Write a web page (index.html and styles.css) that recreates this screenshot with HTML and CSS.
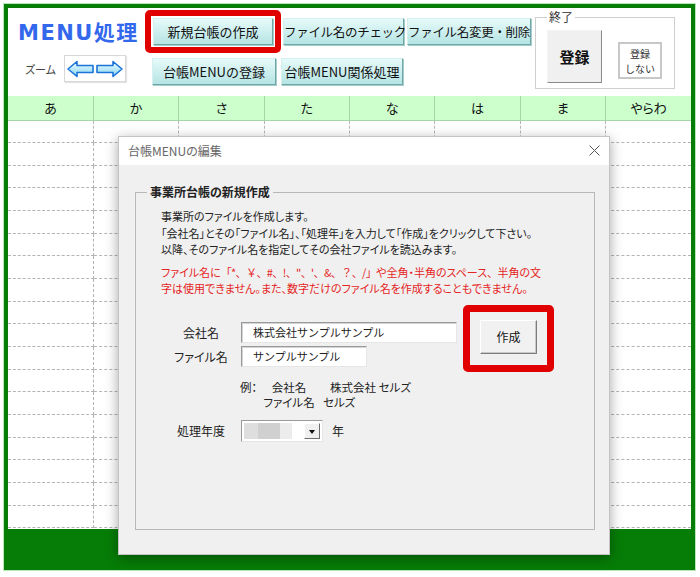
FILE: index.html
```html
<!DOCTYPE html>
<html>
<head>
<meta charset="utf-8">
<title>MENU処理</title>
<link rel="stylesheet" href="styles.css">
</head>
<body>
<div class="frame">
  <div class="sheet">
    <div class="top">
      <div class="brand">
        <div class="title">MENU処理</div>
        <div class="zoom">
          <span class="zoom-label">ズーム</span>
          <span class="zoom-box">
            <svg width="58" height="20" viewBox="0 0 58 20">
              <defs>
                <linearGradient id="ag" x1="0" y1="0" x2="0" y2="1">
                  <stop offset="0" stop-color="#f0fcff"/>
                  <stop offset="1" stop-color="#86d6f2"/>
                </linearGradient>
              </defs>
              <path d="M2 10 L11 2.5 L11 6.5 L27 6.5 L27 13.5 L11 13.5 L11 17.5 Z" fill="url(#ag)" stroke="#1c74d8" stroke-width="1.6" stroke-linejoin="round"/>
              <path d="M56 10 L47 2.5 L47 6.5 L31 6.5 L31 13.5 L47 13.5 L47 17.5 Z" fill="url(#ag)" stroke="#1c74d8" stroke-width="1.6" stroke-linejoin="round"/>
            </svg>
          </span>
        </div>
      </div>
      <div class="actions">
        <div class="row1">
          <div class="mark mark-new"><button class="cyan w120">新規台帳の作成</button></div>
          <button class="cyan tight w121 gap2">ファイル名のチェック</button>
          <button class="cyan tight w124 gap3">ファイル名変更・削除</button>
        </div>
        <div class="row2">
          <button class="cyan w124">台帳MENUの登録</button>
          <button class="cyan w122 gap5">台帳MENU関係処理</button>
        </div>
      </div>
      <fieldset class="quit">
        <legend>終了</legend>
        <div class="quit-body">
          <button class="save">登録</button>
          <button class="nosave">登録<br>しない</button>
        </div>
      </fieldset>
    </div>
    <table class="grid">
      <tr><th>あ</th><th>か</th><th>さ</th><th>た</th><th>な</th><th>は</th><th>ま</th><th>やらわ</th></tr>
      <tr><td></td><td></td><td></td><td></td><td></td><td></td><td></td><td></td></tr>
      <tr><td></td><td></td><td></td><td></td><td></td><td></td><td></td><td></td></tr>
      <tr><td></td><td></td><td></td><td></td><td></td><td></td><td></td><td></td></tr>
      <tr><td></td><td></td><td></td><td></td><td></td><td></td><td></td><td></td></tr>
      <tr><td></td><td></td><td></td><td></td><td></td><td></td><td></td><td></td></tr>
      <tr><td></td><td></td><td></td><td></td><td></td><td></td><td></td><td></td></tr>
      <tr><td></td><td></td><td></td><td></td><td></td><td></td><td></td><td></td></tr>
      <tr><td></td><td></td><td></td><td></td><td></td><td></td><td></td><td></td></tr>
      <tr><td></td><td></td><td></td><td></td><td></td><td></td><td></td><td></td></tr>
      <tr><td></td><td></td><td></td><td></td><td></td><td></td><td></td><td></td></tr>
      <tr><td></td><td></td><td></td><td></td><td></td><td></td><td></td><td></td></tr>
      <tr><td></td><td></td><td></td><td></td><td></td><td></td><td></td><td></td></tr>
      <tr><td></td><td></td><td></td><td></td><td></td><td></td><td></td><td></td></tr>
      <tr><td></td><td></td><td></td><td></td><td></td><td></td><td></td><td></td></tr>
      <tr><td></td><td></td><td></td><td></td><td></td><td></td><td></td><td></td></tr>
      <tr><td></td><td></td><td></td><td></td><td></td><td></td><td></td><td></td></tr>
      <tr><td></td><td></td><td></td><td></td><td></td><td></td><td></td><td></td></tr>
      <tr><td></td><td></td><td></td><td></td><td></td><td></td><td></td><td></td></tr>
    </table>
  </div>

  <div class="dialog">
    <div class="dlg-title">
      <span>台帳MENUの編集</span>
      <svg class="dlg-close" width="11" height="11" viewBox="0 0 11 11">
        <path d="M0.5 0.5 L10.5 10.5 M10.5 0.5 L0.5 10.5" stroke="#555" stroke-width="1"/>
      </svg>
    </div>
    <div class="dlg-body">
      <fieldset class="group">
        <legend>事業所台帳の新規作成</legend>
        <p class="desc">事業所のファイルを作成します。<br>「会社名」とその「ファイル名」、「処理年」を入力して「作成」をクリックして下さい。<br>以降、そのファイル名を指定してその会社ファイルを読込みます。</p>
        <p class="warn">ファイル名に<span class="wide-punct">「*、￥、#、!、"、'、&amp;、？、/」</span>や全角・半角のスペース、 &nbsp;半角の文<br>字は使用できません。また、数字だけのファイル名を作成することもできません。</p>
        <div class="form">
          <div class="fields">
            <label>会社名</label><input class="field wide" value="株式会社サンプルサンプル">
            <label>ファイル名</label><input class="field narrow" value="サンプルサンプル">
          </div>
          <div class="mark mark-make"><button class="make">作成</button></div>
        </div>
        <div class="example">
          <span>例：</span><span class="ex-key">会社名</span><span class="ex-val first">株式会社 セルズ</span>
          <span></span><span class="ex-key">ファイル名</span><span class="ex-val">セルズ</span>
        </div>
        <div class="year">
          <label>処理年度</label>
          <div class="combo"><span class="combo-val"></span><span class="combo-btn"></span></div>
          <span class="year-unit">年</span>
        </div>
      </fieldset>
    </div>
  </div>
</div>
</body>
</html>
```

FILE: styles.css
```css
* {
    box-sizing: border-box;
}

body {
    margin: 0;
    background: #fff;
    color: #111;
    font-family: "Noto Sans CJK JP", sans-serif;
    font-feature-settings: "palt";
}

button {
    font-family: inherit;
    color: #111;
    padding: 0;
    cursor: pointer;
}

.frame {
    position: relative;
    width: 691px;
    height: 566px;
    margin: 4px;
    border: 4px solid #067d06;
    background: #067d06;
    box-shadow: 0 0 0 1px #b8e8b8;
}

.sheet {
    height: 521px;
    background: #fff;
}

/* top area */

.top {
    display: flex;
    height: 88px;
}

.brand {
    width: 137px;
    padding-left: 10px;
}

.title {
    height: 39px;
    margin-top: 15px;
    font-family: "DejaVu Sans", "Noto Sans CJK JP", sans-serif;
    font-weight: bold;
    font-size: 21px;
    line-height: 21px;
    letter-spacing: 1.5px;
    color: #3468ec;
}

.zoom {
    display: flex;
    align-items: center;
    height: 27px;
    margin-top: -7px;
}

.zoom-label {
    margin-left: 7px;
    font-size: 11px;
    color: #444;
}

.zoom-box {
    display: flex;
    align-items: center;
    justify-content: center;
    width: 62px;
    height: 27px;
    margin-left: 8px;
    background: #fff;
    border: 1px solid #d8d8d8;
    box-shadow: 1px 1px 1px #e4e4e4;
}

.actions {
    width: 386px;
}

.row1 {
    display: flex;
    align-items: flex-start;
}

.row2 {
    display: flex;
    margin-top: 5px;
    padding-left: 7px;
}

.mark {
    border: 6px solid #e00000;
    border-radius: 5px;
    background: #fff;
}

.mark-new {
    margin-top: 2px;
    padding: 2px;
}

.cyan {
    height: 27px;
    font-size: 13px;
    white-space: nowrap;
    background: linear-gradient(#e6fafa, #b6e4e4);
    border: 1px solid;
    border-color: #d6f0f0 #6fa6a6 #6fa6a6 #d6f0f0;
    box-shadow: 1px 1px 0 #a6cccc;
}

.tight {
    font-size: 12.5px;
    letter-spacing: -0.3px;
}

.row1 .gap2,
.row1 .gap3 {
    margin-top: 10px;
}

.w120 { width: 120px; }
.w121 { width: 121px; }
.w122 { width: 122px; }
.w124 { width: 124px; }
.gap2 { margin-left: 2px; }
.gap3 { margin-left: 3px; }
.gap5 { margin-left: 5px; }

.quit {
    width: 140px;
    height: 79px;
    margin: 2px 0 0 4px;
    padding: 0 0 0 11px;
    border: 1px solid #cfcfcf;
    min-width: 0;
}

.quit legend {
    padding: 0 2px;
    font-size: 12px;
    line-height: 14px;
    color: #333;
}

.quit-body {
    display: flex;
    align-items: flex-start;
}

.save {
    width: 55px;
    height: 53px;
    margin-top: 6px;
    font-size: 15px;
    font-weight: bold;
    background: #f0f0f0;
    border: 1px solid;
    border-color: #f4f4f4 #8a8a8a #8a8a8a #f4f4f4;
}

.nosave {
    width: 44px;
    height: 37px;
    margin: 18px 0 0 16px;
    font-size: 10px;
    line-height: 15px;
    color: #333;
    background: #fff;
    border: 2px solid #c8c8c8;
}

/* sheet grid */

.grid {
    width: 683px;
    border-collapse: collapse;
    table-layout: fixed;
}

.grid th {
    height: 24px;
    font-size: 13px;
    font-weight: normal;
    background: #ccffcc;
    border: 1px solid #a4d6a4;
    border-top: 0;
}

.grid th:first-child,
.grid td:first-child {
    border-left: 0;
}

.grid th:last-child,
.grid td:last-child {
    border-right: 0;
}

.grid td {
    height: 22.67px;
    padding: 0;
    border: 1px dashed #b4b4b4;
}

/* dialog */

.dialog {
    position: absolute;
    left: 110px;
    top: 128px;
    width: 492px;
    height: 419px;
    display: flex;
    flex-direction: column;
    background: #f0f0f0;
    border: 1px solid #c4c4c4;
    box-shadow: 0 3px 12px rgba(0, 0, 0, 0.35);
}

.dlg-title {
    display: flex;
    align-items: center;
    justify-content: space-between;
    height: 28px;
    padding: 0 9px 2px 9px;
    background: #fff;
    font-size: 12px;
    color: #666;
}

.dlg-body {
    flex: 1;
    display: flex;
    flex-direction: column;
    padding: 19px 14px 24px 16px;
}

.group {
    flex: 1;
    margin: 0;
    padding: 8px 0 0 25px;
    border: 1px solid #b8b8b8;
    min-width: 0;
}

.group legend {
    margin-left: -14px;
    padding: 0 3px;
    font-size: 12px;
    font-weight: bold;
    line-height: 16px;
    color: #222;
}

.desc,
.warn {
    margin: 0;
    font-size: 11px;
    line-height: 16.5px;
}

.desc {
    color: #222;
}

.warn {
    margin-top: 6px;
    color: #e52424;
}

.wide-punct {
    font-feature-settings: normal;
    letter-spacing: -0.6px;
}

.form {
    display: flex;
    align-items: flex-start;
    margin-top: 8px;
}

.fields {
    display: grid;
    grid-template-columns: 62px auto;
    column-gap: 9px;
    row-gap: 3px;
    align-items: center;
    margin: 17px 0 0 9px;
}

.fields label,
.year label {
    font-size: 12px;
    text-align: center;
    color: #222;
}

.field {
    height: 21px;
    padding: 0 0 0 11px;
    font-family: inherit;
    font-size: 11px;
    color: #222;
    background: #fff;
    border: 1px solid;
    border-color: #9a9a9a #e6e6e6 #e6e6e6 #9a9a9a;
    box-shadow: inset 1px 1px 0 #d4d4d4;
    outline: none;
}

.wide { width: 216px; }
.narrow { width: 126px; }

.mark-make {
    margin-left: 6px;
    padding: 8px 10px 11px;
    border-width: 7px;
    background: #f0f0f0;
}

.make {
    display: block;
    width: 57px;
    height: 34px;
    font-size: 12px;
    background: #f1f1f1;
    border: 1px solid;
    border-color: #fff #7c7c7c #7c7c7c #fff;
    box-shadow: inset -1px -1px 0 #c8c8c8;
}

.example {
    display: grid;
    grid-template-columns: 18px 62px auto;
    margin: 8px 0 0 79px;
    font-size: 11.5px;
    line-height: 15.5px;
    color: #222;
}

.ex-key {
    text-align: center;
}

.ex-val {
    padding-left: 3px;
}

.ex-val.first {
    padding-left: 10px;
}

.year {
    display: flex;
    align-items: center;
    margin: 9px 0 0 9px;
}

.year label {
    width: 62px;
}

.combo {
    display: flex;
    width: 82px;
    height: 22px;
    margin-left: 9px;
    padding: 2px;
    background: #fff;
    border: 1px solid;
    border-color: #9a9a9a #e6e6e6 #e6e6e6 #9a9a9a;
}

.combo-val {
    flex: 1;
    background: linear-gradient(to right, #dedede 0 14px, #d0d0d0 14px 36px, #ececec 36px 48px, #fff 48px);
}

.combo-btn {
    position: relative;
    width: 16px;
    background: #f0f0f0;
    border: 1px solid;
    border-color: #fff #6e6e6e #6e6e6e #fff;
}

.combo-btn::after {
    content: "";
    position: absolute;
    left: 4px;
    top: 6px;
    border-left: 3.5px solid transparent;
    border-right: 3.5px solid transparent;
    border-top: 4px solid #111;
}

.year-unit {
    margin-left: 9px;
    font-size: 12px;
    color: #222;
}
```
